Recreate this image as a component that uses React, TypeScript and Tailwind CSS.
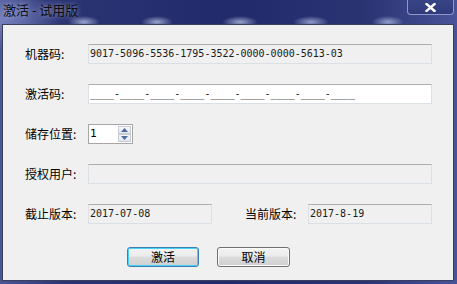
import React from 'react';

function Label({ children, className = '' }: { children: React.ReactNode; className?: string }) {
  return (
    <div className={`w-[63px] shrink-0 text-[12px] leading-[20px] text-black font-['Noto_Sans_CJK_SC',sans-serif] ${className}`}>
      {children}
    </div>
  );
}

function Field({ value = '', white = false, className = 'flex-1' }: { value?: string; white?: boolean; className?: string }) {
  return (
    <div
      className={`h-[20px] border border-[#dbdfe6] border-t-[#abadb3] pl-[1px] text-[10px] leading-[18px] text-[#1a1a1a] font-['DejaVu_Sans_Mono',monospace] whitespace-pre overflow-hidden ${white ? 'bg-white' : 'bg-[#f0f0f0]'} ${className}`}
    >
      {value}
    </div>
  );
}

function Spin() {
  return (
    <div className="w-[45px] h-[20px] border border-[#a6a6a6] bg-white flex items-stretch">
      <div className="flex-1 pl-[1px] text-[11px] leading-[18px] font-['DejaVu_Sans_Mono',monospace] text-black">1</div>
      <div className="w-[14px] flex flex-col p-[1px] pl-0 gap-0">
        <div className="flex-1 flex items-center justify-center border border-[#c8ccd4] bg-[linear-gradient(#f7f8fa,#e2e6ee)]">
          <svg width="7" height="4" viewBox="0 0 7 4"><path d="M0 4 L3.5 0 L7 4 Z" fill="#4d6c9c" /></svg>
        </div>
        <div className="flex-1 flex items-center justify-center border border-[#c8ccd4] bg-[linear-gradient(#f7f8fa,#e2e6ee)]">
          <svg width="7" height="4" viewBox="0 0 7 4"><path d="M0 0 L3.5 4 L7 0 Z" fill="#4d6c9c" /></svg>
        </div>
      </div>
    </div>
  );
}

function Button({ children, primary = false }: { children: React.ReactNode; primary?: boolean }) {
  return (
    <button
      className={`h-[20px] rounded-[3px] border text-[12px] leading-[18px] text-black font-['Noto_Sans_CJK_SC',sans-serif] bg-[linear-gradient(#f3f3f3_0%,#ebebeb_45%,#dcdcdc_50%,#cfcfcf_100%)] ${
        primary ? 'w-[72px] border-[#3c7fb1] shadow-[inset_0_0_0_1px_#48d1f8]' : 'w-[73px] border-[#707070] shadow-[inset_0_0_0_1px_#fafafa]'
      }`}
    >
      {children}
    </button>
  );
}

export default function App() {
  return (
    <div className="w-[457px] h-[284px] flex flex-col overflow-hidden bg-[radial-gradient(ellipse_16px_6px_at_84px_22px,rgba(215,225,255,0.65),transparent),radial-gradient(ellipse_16px_6px_at_157px_22px,rgba(215,225,255,0.65),transparent),radial-gradient(ellipse_18px_6px_at_240px_22px,rgba(215,225,255,0.65),transparent),radial-gradient(ellipse_18px_6px_at_311px_22px,rgba(215,225,255,0.6),transparent),radial-gradient(ellipse_16px_6px_at_388px_22px,rgba(215,225,255,0.6),transparent),radial-gradient(ellipse_60px_30px_at_0px_20px,rgba(130,140,200,0.8),transparent),linear-gradient(90deg,#4a5593_0%,#2b3473_14%,#212a6b_50%,#2a3473_80%,#48539a_100%)]">
      {/* title bar */}
      <div className="h-[24px] shrink-0 flex items-start justify-between">
        <span className="pl-[3px] pt-[1px] text-[13px] leading-[18px] text-[#0d0d0d] font-['Noto_Sans_CJK_SC',sans-serif] [text-shadow:0_0_5px_rgba(200,210,255,0.7)]">
          激活 - 试用版
        </span>
        <div className="mr-[3px] w-[47px] h-[15px] rounded-b-[4px] border border-t-0 border-[#8f97c8] bg-[linear-gradient(#3a4585,#2f3a7c)] flex items-center justify-center">
          <svg width="11" height="9" viewBox="0 0 11 9">
            <path d="M1.5 1 L9.5 8 M9.5 1 L1.5 8" stroke="#ffffff" strokeWidth="2.4" strokeLinecap="square" />
          </svg>
        </div>
      </div>

      {/* client area */}
      <div className="flex-1 ml-[2px] mr-[3px] mb-[3px] bg-[#f0f0f0] border border-[#3a3f5c] pl-[22px] pr-[21px] pt-[19px] flex flex-col">
        <div className="flex items-center h-[20px]">
          <Label>机器码:</Label>
          <Field value="9017-5096-5536-1795-3522-0000-0000-5613-03" />
        </div>
        <div className="flex items-center h-[20px] mt-[20px]">
          <Label>激活码:</Label>
          <Field white value="____-____-____-____-____-____-____-____-____" />
        </div>
        <div className="flex items-center h-[20px] mt-[20px]">
          <Label>储存位置:</Label>
          <Spin />
        </div>
        <div className="flex items-center h-[20px] mt-[20px]">
          <Label>授权用户:</Label>
          <Field />
        </div>
        <div className="flex items-center h-[20px] mt-[20px]">
          <Label>截止版本:</Label>
          <Field value="2017-07-08" className="w-[124px]" />
          <Label className="ml-[33px]">当前版本:</Label>
          <Field value="2017-8-19" className="w-[124px]" />
        </div>
        <div className="flex items-center gap-[18px] mt-[23px] pl-[102px]">
          <Button primary>激活</Button>
          <Button>取消</Button>
        </div>
      </div>
    </div>
  );
}
